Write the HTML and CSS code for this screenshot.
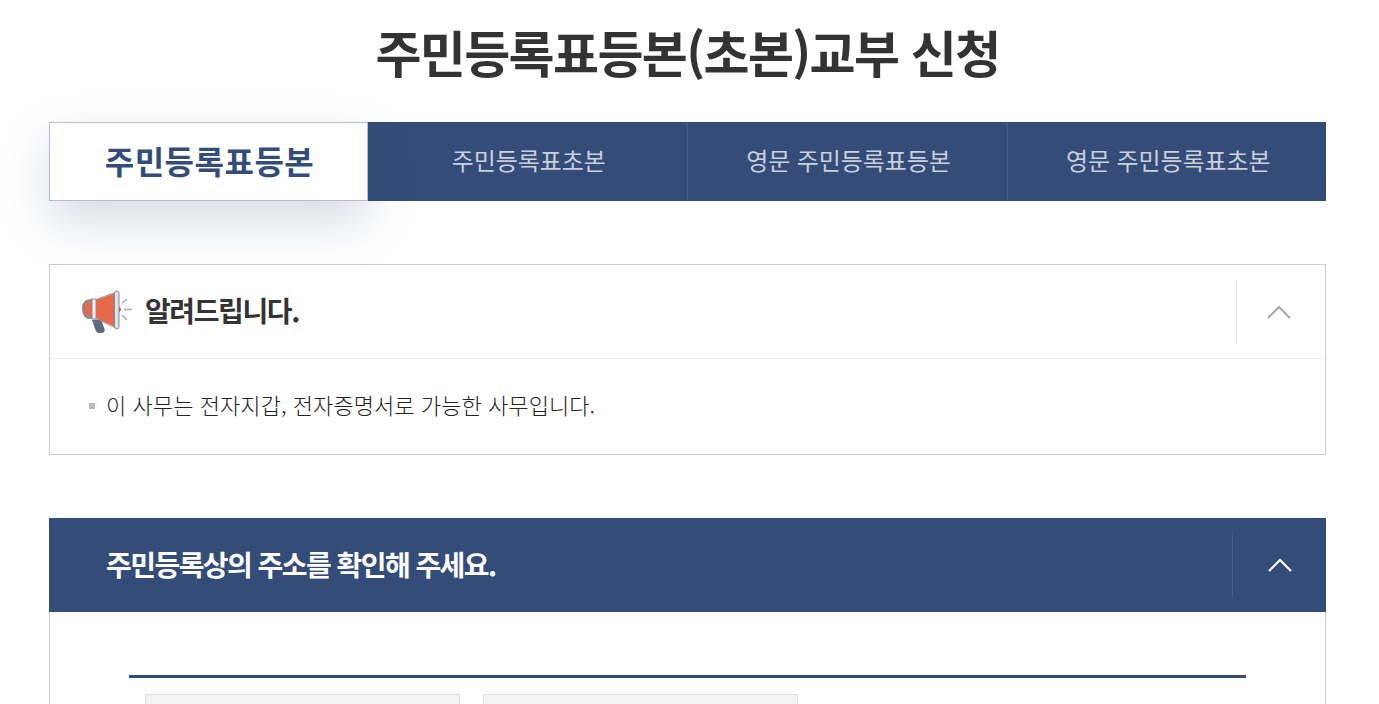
FILE: index.html
```html
<!DOCTYPE html>
<html lang="ko">
<head>
    <meta charset="UTF-8">
    <title>주민등록표등본(초본)교부 신청</title>
    <link rel="stylesheet" href="styles.css">
</head>
<body>
    <div id="container">
        <h1 class="page-title">주민등록표등본(초본)교부 신청</h1>

        <!-- 탭 -->
        <ul class="tabs">
            <li class="tab active">주민등록표등본</li>
            <li class="tab">주민등록표초본</li>
            <li class="tab tab-wide">영문 주민등록표등본</li>
            <li class="tab">영문 주민등록표초본</li>
        </ul>

        <!-- 알려드립니다 -->
        <section class="notice">
            <div class="notice-head">
                <svg class="notice-icon" width="52" height="44" viewBox="0 0 52 44">
                    <path d="M10 30 L19 29 L22.500 39 Q23.500 43 19 43 L17 43 Q14.500 43 13.500 40 Z" fill="#5e6b7d"/>
                    <path d="M9 10 L12 10 L12 28 L9 28 Q1 28 1 19 Q1 10 9 10 Z" fill="#e5694a" stroke="#7f8a9c" stroke-width="2"/>
                    <rect x="10" y="9" width="4" height="20" fill="#f3f3f6" stroke="#7f8a9c" stroke-width="1"/>
                    <path d="M14 10 L33 3 L33 37 L14 28 Z" fill="#e5694a"/>
                    <path d="M14 9.500 L33 2.500 M14 28.500 L33 37.500" stroke="#8c95a6" stroke-width="1" fill="none"/>
                    <rect x="32.500" y="1" width="4.500" height="38" rx="2.200" fill="#e1e3ea" stroke="#7f8a9c" stroke-width="1"/>
                    <path d="M37 16.500 Q41 19.500 37 22.500 Z" fill="#d8553a"/>
                    <path d="M40 13 L45 9 M42 19.500 L50 19.500 M40 25 L45 30" stroke="#a3abb8" stroke-width="1.500" fill="none"/>
                </svg>
                <h2 class="notice-title">알려드립니다.</h2>
                <button class="toggle">
                    <svg class="chevron" width="26" height="16" viewBox="0 0 26 16"><path d="M2 14 L13 3 L24 14" fill="none" stroke="#a0a39b" stroke-width="1.800"/></svg>
                </button>
            </div>
            <ul class="notice-list">
                <li>이 사무는 전자지갑, 전자증명서로 가능한 사무입니다.</li>
            </ul>
        </section>

        <!-- 주소 확인 -->
        <section class="address">
            <div class="address-head">
                <h2 class="address-title">주민등록상의 주소를 확인해 주세요.</h2>
                <button class="toggle toggle-light">
                    <svg width="26" height="16" viewBox="0 0 26 16"><path d="M2 14 L13 3 L24 14" fill="none" stroke="#fff" stroke-width="2.200"/></svg>
                </button>
            </div>
            <div class="address-body">
                <div class="address-form">
                    <div class="field"></div>
                    <div class="field"></div>
                </div>
            </div>
        </section>
    </div>
</body>
</html>
```

FILE: styles.css
```css
/* 기본 */
body {
    font-family: "Noto Sans CJK KR", "Noto Sans", sans-serif;
    background-color: #fff;
    color: #333;
    margin: 0;
    padding: 0;
}

#container {
    height: 704px;
    box-sizing: border-box;
    padding: 0 53px 0 49px;
    overflow: hidden;
}

.page-title {
    margin: 0;
    height: 122px;
    padding-top: 17px;
    box-sizing: border-box;
    font-size: 50px;
    line-height: 68px;
    font-weight: 700;
    letter-spacing: -1.6px;
    text-align: center;
    color: #333;
}

/* 탭 */
.tabs {
    display: flex;
    list-style: none;
    margin: 0;
    padding: 0;
    height: 79px;
    background-color: #344c78;
}

.tab {
    flex: 1;
    display: flex;
    align-items: center;
    justify-content: center;
    padding: 0 0 4px 3px;
    box-sizing: border-box;
    font-size: 24px;
    letter-spacing: -0.1px;
    color: #c9d0dc;
    border-left: 1px solid #465c85;
}

.tab-wide {
    flex: none;
    width: 320px;
}

.tab.active {
    flex: none;
    width: 319px;
    padding: 0 0 4px 2px;
    background-color: #fff;
    border: 1px solid #b1bedb;
    color: #344c78;
    font-size: 32px;
    font-weight: 700;
    letter-spacing: 0.5px;
    box-shadow: 0 20px 50px rgba(52, 76, 120, 0.2);
}

.tab.active + .tab {
    border-left: 0;
}

/* 알림 */
.notice {
    margin-top: 63px;
    height: 191px;
    box-sizing: border-box;
    border: 1px solid #ccc;
}

.notice-head {
    display: flex;
    align-items: center;
    height: 94px;
    box-sizing: border-box;
    padding: 0 0 0 32px;
    border-bottom: 1px solid #eee;
}

.notice-icon {
    flex: none;
    margin-right: 11px;
}

.notice-title {
    flex: 1;
    margin: 0;
    padding-bottom: 3px;
    font-size: 28px;
    font-weight: 700;
    letter-spacing: -1.4px;
    color: #333;
}

.toggle {
    flex: none;
    display: flex;
    align-items: center;
    justify-content: center;
    width: 89px;
    height: 64px;
    padding: 0;
    background: none;
    border: 0;
    border-left: 1px solid #eaeaea;
}

.chevron {
    margin-right: 4px;
}

.notice-list {
    list-style: none;
    margin: 0;
    padding: 29px 0 0 39px;
}

.notice-list li {
    position: relative;
    padding-left: 17px;
    font-size: 22px;
    line-height: 32px;
    font-weight: 300;
    letter-spacing: 0.07px;
    color: #222;
}

.notice-list li::before {
    content: "";
    position: absolute;
    left: 0;
    top: 15px;
    width: 6px;
    height: 6px;
    background-color: #bbb;
}

/* 주소 */
.address {
    margin-top: 63px;
}

.address-head {
    display: flex;
    align-items: center;
    height: 94px;
    padding-left: 57px;
    background-color: #344c78;
}

.address-title {
    flex: 1;
    margin: 0;
    padding-bottom: 3px;
    font-size: 28px;
    font-weight: 700;
    letter-spacing: -1.55px;
    color: #fff;
}

.toggle-light {
    width: 94px;
    border-left-color: #4a6087;
}

.address-body {
    padding: 63px 79px 0;
    border-left: 1px solid #ccc;
    border-right: 1px solid #ccc;
}

.address-form {
    display: flex;
    gap: 23px;
    padding: 16px 16px 0;
    border-top: 3px solid #344c78;
}

.field {
    width: 315px;
    height: 60px;
    box-sizing: border-box;
    background-color: #f4f4f4;
    border: 1px solid #ddd;
}
```
